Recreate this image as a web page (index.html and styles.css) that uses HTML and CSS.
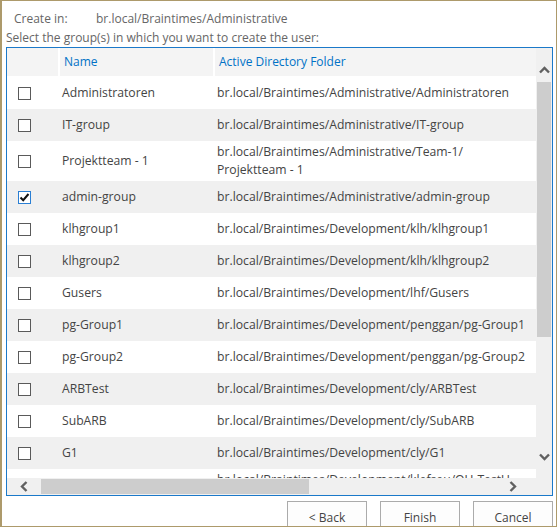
FILE: index.html
```html
<!DOCTYPE html>
<html lang="en">

<head>
    <meta charset="UTF-8">
    <title>Create User - Groups</title>
    <link rel="stylesheet" href="styles.css">
</head>

<body>
    <div class="dialog">
        <div class="info-row">
            <span class="info-label">Create in:</span>
            <span class="info-value">br.local/Braintimes/Administrative</span>
        </div>
        <div class="hint">Select the group(s) in which you want to create the user:</div>

        <div class="grid-box">
            <div class="grid-main">
                <div class="grid-head">
                    <div class="head-cell"></div>
                    <div class="head-cell">Name</div>
                    <div class="head-cell">Active Directory Folder</div>
                </div>

                <div class="grid-body">
                    <div class="row">
                        <div class="cell-check"><span class="check"></span></div>
                        <div class="cell">Administratoren</div>
                        <div class="cell">br.local/Braintimes/Administrative/Administratoren</div>
                    </div>
                    <div class="row alt">
                        <div class="cell-check"><span class="check"></span></div>
                        <div class="cell">IT-group</div>
                        <div class="cell">br.local/Braintimes/Administrative/IT-group</div>
                    </div>
                    <div class="row">
                        <div class="cell-check"><span class="check"></span></div>
                        <div class="cell">Projektteam - 1</div>
                        <div class="cell">br.local/Braintimes/Administrative/Team-1/<br>Projektteam - 1</div>
                    </div>
                    <div class="row alt">
                        <div class="cell-check">
                            <span class="check checked">
                                <svg width="11" height="11" viewBox="0 0 11 11">
                                    <path d="M1.5 5.5 L4.2 8.2 L9.5 2" fill="none" stroke="#111" stroke-width="2" />
                                </svg>
                            </span>
                        </div>
                        <div class="cell">admin-group</div>
                        <div class="cell">br.local/Braintimes/Administrative/admin-group</div>
                    </div>
                    <div class="row">
                        <div class="cell-check"><span class="check"></span></div>
                        <div class="cell">klhgroup1</div>
                        <div class="cell">br.local/Braintimes/Development/klh/klhgroup1</div>
                    </div>
                    <div class="row alt">
                        <div class="cell-check"><span class="check"></span></div>
                        <div class="cell">klhgroup2</div>
                        <div class="cell">br.local/Braintimes/Development/klh/klhgroup2</div>
                    </div>
                    <div class="row">
                        <div class="cell-check"><span class="check"></span></div>
                        <div class="cell">Gusers</div>
                        <div class="cell">br.local/Braintimes/Development/lhf/Gusers</div>
                    </div>
                    <div class="row alt">
                        <div class="cell-check"><span class="check"></span></div>
                        <div class="cell">pg-Group1</div>
                        <div class="cell">br.local/Braintimes/Development/penggan/pg-Group1</div>
                    </div>
                    <div class="row">
                        <div class="cell-check"><span class="check"></span></div>
                        <div class="cell">pg-Group2</div>
                        <div class="cell">br.local/Braintimes/Development/penggan/pg-Group2</div>
                    </div>
                    <div class="row alt">
                        <div class="cell-check"><span class="check"></span></div>
                        <div class="cell">ARBTest</div>
                        <div class="cell">br.local/Braintimes/Development/cly/ARBTest</div>
                    </div>
                    <div class="row">
                        <div class="cell-check"><span class="check"></span></div>
                        <div class="cell">SubARB</div>
                        <div class="cell">br.local/Braintimes/Development/cly/SubARB</div>
                    </div>
                    <div class="row alt">
                        <div class="cell-check"><span class="check"></span></div>
                        <div class="cell">G1</div>
                        <div class="cell">br.local/Braintimes/Development/cly/G1</div>
                    </div>
                    <div class="row">
                        <div class="cell-check"><span class="check"></span></div>
                        <div class="cell">OU-TestUsers</div>
                        <div class="cell">br.local/Braintimes/Development/klefseu/OU-TestU<br>sers</div>
                    </div>
                </div>

                <!-- horizontal scrollbar -->
                <div class="hscroll">
                    <div class="hbtn-left">
                        <svg width="8" height="11" viewBox="0 0 8 11">
                            <polyline points="6.5,1 2,5.5 6.5,10" fill="none" stroke="#606060" stroke-width="2.4" />
                        </svg>
                    </div>
                    <div class="htrack"><div class="hthumb"></div></div>
                    <div class="hbtn-right">
                        <svg width="8" height="11" viewBox="0 0 8 11">
                            <polyline points="1.5,1 6,5.5 1.5,10" fill="none" stroke="#606060" stroke-width="2.4" />
                        </svg>
                    </div>
                </div>
            </div>

            <!-- vertical scrollbar -->
            <div class="vscroll">
                <div class="vbtn-up">
                    <svg width="11" height="8" viewBox="0 0 11 8">
                        <polyline points="1,6.5 5.5,2 10,6.5" fill="none" stroke="#606060" stroke-width="2.4" />
                    </svg>
                </div>
                <div class="vtrack"><div class="vthumb"></div></div>
                <div class="vbtn-down">
                    <svg width="11" height="8" viewBox="0 0 11 8">
                        <polyline points="1,1.5 5.5,6 10,1.5" fill="none" stroke="#606060" stroke-width="2.4" />
                    </svg>
                </div>
            </div>
        </div>

        <div class="buttons">
            <button class="btn">&lt; Back</button>
            <button class="btn">Finish</button>
            <button class="btn">Cancel</button>
        </div>
    </div>
</body>

</html>
```

FILE: styles.css
```css
body {
    margin: 0;
    padding: 0;
    background: #fff;
    overflow: hidden;
    font-family: "Open Sans", "Noto Sans", sans-serif;
    font-size: 12px;
}

.dialog {
    box-sizing: border-box;
    width: 557px;
    height: 527px;
    border: 1px solid #ad9a6b;
    border-left-width: 2px;
    background: #fff;
    overflow: hidden;
}

.info-row {
    display: flex;
    margin-top: 10px;
    padding-left: 12px;
    height: 16px;
    line-height: 16px;
    color: #666;
}

.info-label {
    width: 82px;
}

.hint {
    margin-top: 3px;
    margin-left: 4px;
    height: 16px;
    line-height: 16px;
    color: #666;
}

.grid-box {
    box-sizing: border-box;
    display: flex;
    margin: 1px 0 0 4px;
    width: 547px;
    height: 449px;
    border: 1px solid #1b79c9;
}

.grid-main {
    flex: 1;
    display: flex;
    flex-direction: column;
    min-width: 0;
}

.grid-head {
    display: grid;
    grid-template-columns: 51px 153px 1fr;
    column-gap: 2px;
    background: #fff;
    height: 28px;
    border-bottom: 1px solid #fff;
}

.head-cell {
    background: #f4f4f4;
    color: #0072c6;
    line-height: 28px;
    padding-left: 4px;
}

.grid-body {
    flex: 1;
    overflow: hidden;
}

.row {
    display: grid;
    grid-template-columns: 51px 153px 1fr;
    column-gap: 2px;
    align-items: center;
    min-height: 32px;
    padding: 2px 0;
    box-sizing: border-box;
    background: #fff;
    color: #444;
    font-size: 12.2px;
    line-height: 18px;
}

.row.alt {
    background: #f0f0f0;
}

.cell {
    padding-left: 2px;
    white-space: nowrap;
}

.cell-check {
    padding-left: 11px;
    display: flex;
}

.check {
    box-sizing: border-box;
    width: 13px;
    height: 13px;
    border: 1px solid #5a5a5a;
    background: #fff;
    display: flex;
    align-items: center;
    justify-content: center;
}

.check.checked {
    border-color: #2a7fd4;
}

.hscroll {
    display: flex;
    height: 17px;
    background: #f0f0f0;
}

.hbtn-left {
    width: 34px;
    display: flex;
    align-items: center;
    justify-content: center;
}

.htrack {
    flex: 1;
    padding: 1px 0 1px;
}

.hthumb {
    width: 268px;
    height: 15px;
    background: #cdcdcd;
}

.hbtn-right {
    width: 46px;
    display: flex;
    align-items: center;
    justify-content: center;
}

.vscroll {
    width: 16px;
    display: flex;
    flex-direction: column;
    background: #f0f0f0;
}

.vbtn-up {
    height: 34px;
    display: flex;
    justify-content: center;
    align-items: flex-start;
    padding-top: 18px;
    box-sizing: border-box;
}

.vtrack {
    flex: 1;
    padding-left: 1px;
}

.vthumb {
    width: 14px;
    height: 255px;
    background: #cdcdcd;
}

.vbtn-down {
    height: 48px;
    display: flex;
    justify-content: center;
    align-items: flex-start;
    padding-top: 6px;
    box-sizing: border-box;
}

.buttons {
    display: flex;
    justify-content: flex-end;
    gap: 13px;
    margin-top: 5px;
    padding-right: 3px;
}

.btn {
    width: 80px;
    height: 30px;
    border: 1px solid #ababab;
    background: #fdfdfd;
    color: #444;
    font-family: "Open Sans", "Noto Sans", sans-serif;
    font-size: 12px;
    padding: 2px 0 0;
}
```
